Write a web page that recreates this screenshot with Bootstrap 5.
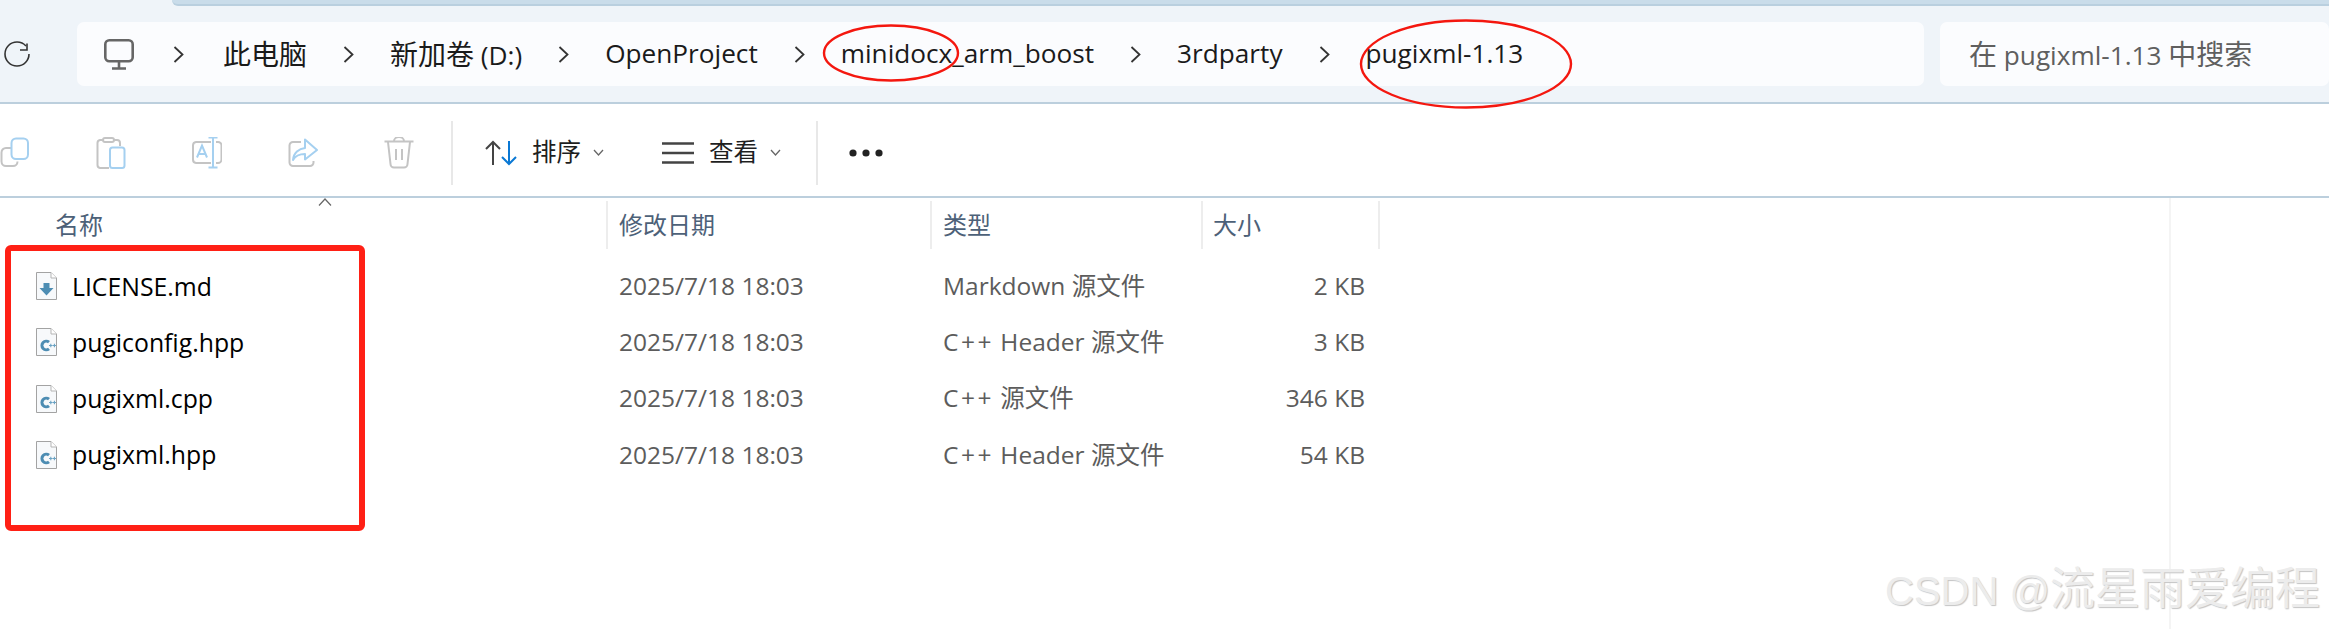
<!DOCTYPE html>
<html lang="zh-CN">
<head>
  <meta charset="UTF-8" />
  <meta name="viewport" content="width=device-width, initial-scale=1" />
  <title>pugixml-1.13</title>
  <link href="https://cdn.jsdelivr.net/npm/bootstrap@5.3.0/dist/css/bootstrap.min.css" rel="stylesheet" />
  <style>
    html, body { height: 100%; }
    body {
      background: #fff;
      overflow: hidden;
      font-family: "Open Sans", "Noto Sans CJK SC", sans-serif;
      color: #000;
    }
    .page-wrap { height: 629px; }

    /* address row */
    .top-strip { background: #eff4f9; height: 6px; }
    .top-tab {
      margin-left: 172px;
      height: 6px;
      background: #c9dcea;
      border-bottom: 2px solid #b9cfdf;
      border-bottom-left-radius: 6px;
    }
    .addr-row {
      height: 98px;
      background: #eff4f9;
      border-bottom: 2px solid #bccfdd;
    }
    .refresh-slot { width: 77px; padding-left: 3px; }
    .addr-box, .search-box {
      height: 64px;
      background: #fbfcfe;
      border-radius: 7px;
    }
    .addr-box { width: 1847px; padding-left: 27px; font-size: 26.2px; color: #1a1a1a; }
    .search-box { margin-left: 16px; padding-left: 29px; font-size: 26.2px; color: #5f5f5f; }
    .cjk-big { font-size: 28px; }
    .crumb-sep { width: 83px; }
    .crumb-sep.first-sep { width: 89px; }

    /* toolbar */
    .tool-row {
      height: 94px;
      padding-top: 5px;
      border-bottom: 2px solid #bccfdd;
      font-size: 24.5px;
      color: #1f1f1f;
    }
    .tool-icons { gap: 66px; }
    .tool-sep { width: 2px; height: 64px; background: #e8e8e8; }
    .sep-a { margin-left: 37px; }
    .sort-ico { margin-left: 32px; }
    .tool-label { margin-left: 15px; }
    .tool-caret { margin-left: 12px; }
    .view-ico { margin-left: 58px; }
    .sep-b { margin-left: 35px; }
    .dots-ico { margin-left: 31px; }

    /* file list */
    .list-area { height: 431px; }
    .list-main { width: 2169px; }
    .list-side { flex: 1; border-left: 2px solid #f4f4f4; }
    .head-row { height: 51px; padding-top: 3px; font-size: 24px; color: #4d6178; }
    .file-list { padding-top: 9px; }
    .file-row { height: 56.3px; font-size: 24.5px; color: #5c5c5c; }
    .c-name { width: 606px; }
    .c-date { width: 324px; padding-left: 13px; }
    .c-type { width: 271px; padding-left: 13px; }
    .c-size { width: 179px; padding-right: 15px; text-align: right; }
    .head-row { margin-top: 0; }
    .head-row .c-date, .head-row .c-type, .head-row .c-size {
      border-left: 2px solid #ededed;
    }
    .head-row .c-date, .head-row .c-type { padding-left: 11px; }
    .head-row .c-size { text-align: left; padding-left: 10px; border-right: 2px solid #ededed; }
    .head-row .c-name { padding-left: 55px; }
    .file-row .c-name { padding-left: 36px; }
    .file-title { margin-left: 15px; font-size: 24.8px; color: #000; }
    .cpp-tag { letter-spacing: 2.5px; }

    /* annotations over the screenshot */
    .sort-arrow { position: absolute; left: 318px; top: 198px; }
    .note-frame {
      position: absolute;
      left: 5px; top: 245px;
      width: 360px; height: 286px;
      border: 6px solid #ff2015;
      border-radius: 6px;
    }
    .note-ring { position: absolute; }
    .ring-a { left: 820px; top: 22px; }
    .ring-b { left: 1357px; top: 16px; }
    .wmark {
      position: absolute;
      left: 1885px; top: 560px;
      font-family: "Liberation Sans", "Noto Sans CJK SC", sans-serif;
      font-size: 40px;
      line-height: 60px;
      white-space: nowrap;
      color: #ececec;
      text-shadow: 1px 1px 1px #c4c4c4;
    }
    .wmark span { font-size: 45px; }
  </style>
</head>
<body>

<div class="page-wrap position-relative">

  <!-- Address row -->
  <div class="top-strip"><div class="top-tab"></div></div>
  <div class="addr-row d-flex align-items-center">
    <div class="refresh-slot">
      <svg class="d-block" width="28" height="28" viewBox="0 0 28 28" fill="none" stroke="#333" stroke-width="1.6">
        <path d="M23 6A12 12 0 0 0 14 2A12 12 0 1 0 26 14"/>
        <path d="M24 3.500V10H17"/>
      </svg>
    </div>
    <div class="addr-box d-flex align-items-center">
      <svg width="30" height="31" viewBox="0 0 30 31" fill="none" stroke="#666" stroke-width="2.6">
        <rect x="1.3" y="1.3" width="27.4" height="21" rx="4"/>
        <path d="M15 23V29M8 29.5H22"/>
      </svg>
      <div class="crumb-sep first-sep d-flex justify-content-center">
        <svg width="11" height="17" viewBox="0 0 11 17" fill="none" stroke="#333" stroke-width="1.8"><path d="M1.5 1L9.5 8.5L1.5 16"/></svg>
      </div>
      <span class="cjk-big">此电脑</span>
      <div class="crumb-sep d-flex justify-content-center">
        <svg width="11" height="17" viewBox="0 0 11 17" fill="none" stroke="#333" stroke-width="1.8"><path d="M1.5 1L9.5 8.5L1.5 16"/></svg>
      </div>
      <span><span class="cjk-big">新加卷</span> (D:)</span>
      <div class="crumb-sep d-flex justify-content-center">
        <svg width="11" height="17" viewBox="0 0 11 17" fill="none" stroke="#333" stroke-width="1.8"><path d="M1.5 1L9.5 8.5L1.5 16"/></svg>
      </div>
      <span>OpenProject</span>
      <div class="crumb-sep d-flex justify-content-center">
        <svg width="11" height="17" viewBox="0 0 11 17" fill="none" stroke="#333" stroke-width="1.8"><path d="M1.5 1L9.5 8.5L1.5 16"/></svg>
      </div>
      <span>minidocx_arm_boost</span>
      <div class="crumb-sep d-flex justify-content-center">
        <svg width="11" height="17" viewBox="0 0 11 17" fill="none" stroke="#333" stroke-width="1.8"><path d="M1.5 1L9.5 8.5L1.5 16"/></svg>
      </div>
      <span>3rdparty</span>
      <div class="crumb-sep d-flex justify-content-center">
        <svg width="11" height="17" viewBox="0 0 11 17" fill="none" stroke="#333" stroke-width="1.8"><path d="M1.5 1L9.5 8.5L1.5 16"/></svg>
      </div>
      <span>pugixml-1.13</span>
    </div>
    <div class="search-box flex-grow-1 d-flex align-items-center">
      <span><span class="cjk-big">在</span> pugixml-1.13 <span class="cjk-big">中搜索</span></span>
    </div>
  </div>

  <!-- Toolbar -->
  <div class="tool-row d-flex align-items-center">
    <div class="tool-icons d-flex">
      <svg width="30" height="32" viewBox="0 0 30 32" fill="none" stroke-width="2">
        <path stroke="#c4c4c4" d="M11 11H6A4.500 4.500 0 0 0 1.500 15.500V24.500A4.500 4.500 0 0 0 6 29H13A4.500 4.500 0 0 0 17.500 24.500"/>
        <rect stroke="#a5d0f0" x="11.500" y="1.500" width="16.500" height="20.500" rx="4.500"/>
      </svg>
      <svg width="30" height="32" viewBox="0 0 30 32" fill="none" stroke-width="2">
        <path stroke="#c4c4c4" d="M7 3H4A3 3 0 0 0 1.500 6V28A3 3 0 0 0 4 31H13M18 3H21A3 3 0 0 1 24 6V9"/>
        <rect stroke="#c4c4c4" x="7" y="1" width="11" height="4" rx="2"/>
        <rect stroke="#a5d0f0" x="14" y="10.500" width="14.500" height="20.500" rx="2.500"/>
      </svg>
      <svg width="30" height="32" viewBox="0 0 30 32" fill="none" stroke-width="2">
        <path stroke="#c4c4c4" d="M19 5H4A3.500 3.500 0 0 0 1 8.500V22.500A3.500 3.500 0 0 0 4 26H19M24 5H26A3.500 3.500 0 0 1 29.500 8.500V22.500A3.500 3.500 0 0 1 26 26H24"/>
        <path stroke="#a5d0f0" d="M21 0.500V30.500M16.500 0.500H25.500M16.500 30.500H25.500"/>
        <path stroke="#a5d0f0" d="M5 20.500L10 8.500L15 20.500M6.500 17H13.500"/>
      </svg>
      <svg width="30" height="32" viewBox="0 0 30 32" fill="none" stroke-width="2">
        <path stroke="#c4c4c4" d="M13 5H5A3.500 3.500 0 0 0 1.500 8.500V25.500A3.500 3.500 0 0 0 5 29H22A3.500 3.500 0 0 0 25.500 25.500V24"/>
        <path stroke="#a5d0f0" stroke-linejoin="round" d="M5 23C5.500 16 11 11.500 17 11V2.500L29 13L17 22.500V17C12 17 7.500 18.500 5 23Z"/>
      </svg>
      <svg width="30" height="32" viewBox="0 0 30 32" fill="none" stroke="#c4c4c4" stroke-width="2">
        <path d="M0.500 4.500H29.500M10 4A5 4 0 0 1 20 4"/>
        <path d="M4 5L6.500 27A3.500 3.500 0 0 0 10 30.500H20A3.500 3.500 0 0 0 23.500 27L26 5"/>
        <path d="M12 12V23M18 12V23"/>
      </svg>
    </div>
    <div class="tool-sep sep-a"></div>

    <svg class="sort-ico" width="32" height="26" viewBox="0 0 32 26" fill="none" stroke-width="2">
      <path stroke="#444" d="M8 25V2M1 9L8 2L15 9"/>
      <path stroke="#0a78d4" d="M24 1V24M17 17L24 24L31 17"/>
    </svg>
    <span class="tool-label">排序</span>
    <svg class="tool-caret" width="11" height="7" viewBox="0 0 11 7" fill="none" stroke="#666" stroke-width="1.3"><path d="M1 1L5.500 6L10 1"/></svg>

    <svg class="view-ico" width="32" height="24" viewBox="0 0 32 24" fill="none" stroke="#444" stroke-width="2.600">
      <path d="M0 2.500H32M0 12H32M0 21.500H32"/>
    </svg>
    <span class="tool-label">查看</span>
    <svg class="tool-caret" width="11" height="7" viewBox="0 0 11 7" fill="none" stroke="#666" stroke-width="1.3"><path d="M1 1L5.500 6L10 1"/></svg>

    <div class="tool-sep sep-b"></div>
    <svg class="dots-ico" width="34" height="8" viewBox="0 0 34 8" fill="#222">
      <circle cx="4" cy="4" r="3.600"/><circle cx="17" cy="4" r="3.600"/><circle cx="30" cy="4" r="3.600"/>
    </svg>
  </div>

  <!-- File list -->
  <div class="list-area d-flex">
    <div class="list-main">
      <div class="head-row d-flex align-items-stretch">
        <div class="c-name d-flex align-items-center">名称</div>
        <div class="c-date d-flex align-items-center">修改日期</div>
        <div class="c-type d-flex align-items-center">类型</div>
        <div class="c-size d-flex align-items-center">大小</div>
      </div>
      <div class="file-list" id="fileList"></div>
    </div>
    <div class="list-side"></div>
  </div>

  <!-- Sort arrow, red marks and the watermark lie over the content -->
  <svg class="sort-arrow" width="14" height="8" viewBox="0 0 14 8" fill="none" stroke="#666" stroke-width="1.200"><path d="M1 7.500L7 1L13 7.500"/></svg>
  <div class="note-frame"></div>
  <svg class="note-ring ring-a" width="142" height="62" viewBox="0 0 142 62" fill="none" stroke="#f4170f" stroke-width="2.400">
    <ellipse cx="71" cy="31" rx="67" ry="27.500"/>
  </svg>
  <svg class="note-ring ring-b" width="218" height="96" viewBox="0 0 218 96" fill="none" stroke="#f4170f" stroke-width="2.400">
    <ellipse cx="109" cy="48" rx="105" ry="43.500"/>
  </svg>
  <div class="wmark">CSDN @<span>流星雨爱编程</span></div>
</div>

<script src="https://cdn.jsdelivr.net/npm/bootstrap@5.3.0/dist/js/bootstrap.bundle.min.js"></script>
<script>
  const files = [
    { name: 'LICENSE.md', date: '2025/7/18 18:03', type: 'Markdown 源文件', size: '2 KB', md: true },
    { name: 'pugiconfig.hpp', date: '2025/7/18 18:03', type: '<span class="cpp-tag">C++</span> Header 源文件', size: '3 KB' },
    { name: 'pugixml.cpp', date: '2025/7/18 18:03', type: '<span class="cpp-tag">C++</span> 源文件', size: '346 KB' },
    { name: 'pugixml.hpp', date: '2025/7/18 18:03', type: '<span class="cpp-tag">C++</span> Header 源文件', size: '54 KB' }
  ];

  function fileIcon(md) {
    const mark = md
      ? '<path d="M7.500 11H13.500V16H17.500L10.500 23.500L3.500 16H7.500Z" fill="#4d8db3"/>'
      : '<path d="M13 14.200A4.300 4.300 0 1 0 13 20.800" fill="none" stroke="#4d8db3" stroke-width="3"/>' +
        '<path d="M13 17.500H16.500M14.800 15.800V19.200M16.800 17.500H20M18.400 15.800V19.200" fill="none" stroke="#6ba3c4" stroke-width="1.100"/>';
    return '<svg width="21" height="28" viewBox="0 0 21 28">' +
      '<path d="M0.500 0.500H15L20.500 6V27.500H0.500Z" fill="#f7f9fb" stroke="#a3a3a3"/>' +
      '<path d="M15 0.500V6H20.500" fill="#fff" stroke="#b5b5b5"/>' + mark + '</svg>';
  }

  const list = document.getElementById('fileList');
  files.forEach(f => {
    const row = document.createElement('div');
    row.className = 'file-row d-flex align-items-center';
    row.innerHTML = `
      <div class="c-name d-flex align-items-center">${fileIcon(f.md)}<span class="file-title">${f.name}</span></div>
      <div class="c-date">${f.date}</div>
      <div class="c-type">${f.type}</div>
      <div class="c-size">${f.size}</div>`;
    list.appendChild(row);
  });
</script>
</body>
</html>
